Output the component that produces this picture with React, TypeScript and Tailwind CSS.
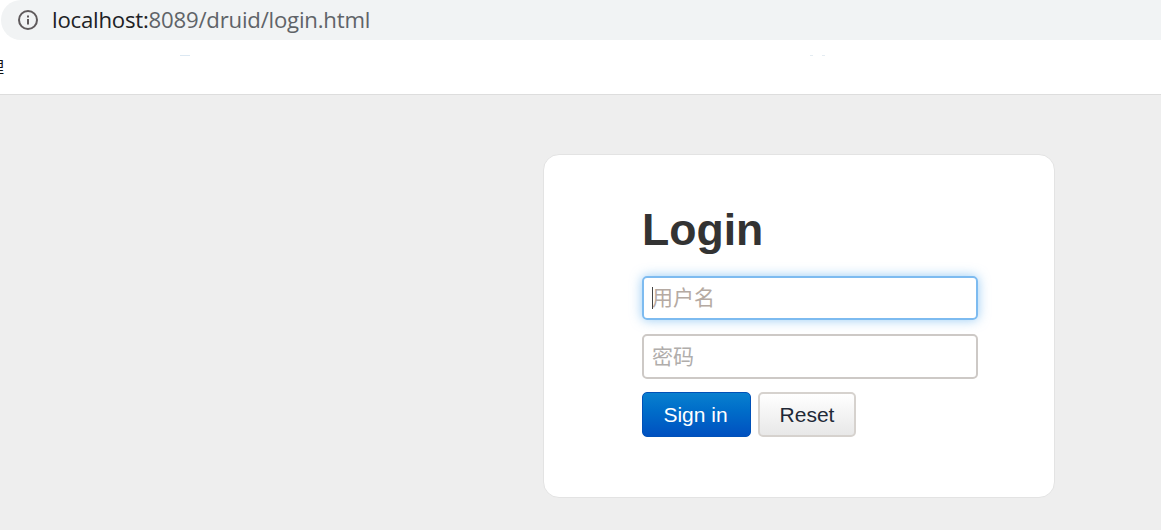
import React from 'react';

const cjk = "font-['Liberation_Sans','Noto_Sans_CJK_SC',sans-serif]";

const App: React.FC = () => {
  return (
    <div className="w-[1161px] h-[530px] overflow-hidden bg-[#eeeeee] font-['Liberation_Sans',sans-serif]">
      <div className="bg-white h-[95px] border-b border-[#dddddd]">
        <div className="h-10 bg-[#f1f3f4] rounded-l-[20px] ml-[1px] flex items-center pl-[17px]">
          <svg width="20" height="20" viewBox="0 0 20 20" fill="none" className="shrink-0">
            <circle cx="10" cy="10" r="9" stroke="#5f5a5c" strokeWidth="2" />
            <rect x="9" y="9" width="2" height="5.5" fill="#5f5a5c" />
            <rect x="9" y="5.5" width="2" height="2" fill="#5f5a5c" />
          </svg>
          <span className="ml-[14px] text-[22.2px] leading-none font-['Open_Sans',sans-serif] tracking-[-0.22px] text-[#5f6368] whitespace-nowrap">
            <span className="text-[#202124]">localhost:</span>8089/druid/login.html
          </span>
        </div>
        <div className="h-[54px] overflow-hidden relative">
          <div className="flex pt-[15px]">
            <span className="w-[180px]" />
            <span className="w-[10px] h-[1px] bg-[#dce8f2]" />
            <span className="w-[620px]" />
            <span className="w-[3px] h-[1px] bg-[#e4ecf2]" />
            <span className="w-[9px]" />
            <span className="w-[3px] h-[1px] bg-[#e4ecf2]" />
          </div>
          <span className={`absolute left-[-12px] top-[20px] text-[16px] leading-none text-[#111111] ${cjk}`}>理</span>
        </div>
      </div>

      <div className="pl-[543px] pt-[59px]">
        <div className="w-[512px] h-[344px] bg-white rounded-[16px] border border-[#e3e3e3] pl-[98px] pr-[75px] pt-[48px]">
          <h1 className="text-[44.6px] leading-[54px] font-bold text-[#333333] mb-[19px]">Login</h1>
          <div className="relative mb-[14px]">
            <input
              readOnly
              placeholder="用户名"
              className={`block w-[336px] h-[44px] rounded-[5px] border-2 border-[#7dbbf0] px-[8px] text-[21px] outline-none shadow-[0_0_12px_rgba(82,168,236,0.6)] placeholder:text-[#b5aaa2] ${cjk}`}
            />
            <span className="absolute left-[10px] top-[11px] w-[1px] h-[22px] bg-[#444444]" />
          </div>
          <input
            readOnly
            placeholder="密码"
            className={`block w-[336px] h-[45px] rounded-[5px] border-2 border-[#cdc9c6] px-[8px] text-[21px] outline-none placeholder:text-[#b0adab] ${cjk}`}
          />
          <div className="flex gap-[7px] mt-[13px]">
            <button className="w-[109px] h-[45px] pr-[2px] rounded-[5px] border border-[#0051b8] bg-gradient-to-b from-[#0a80cf] to-[#0050c0] text-white text-[21px] leading-none">
              Sign in
            </button>
            <button className="w-[98px] h-[45px] rounded-[5px] border-2 border-[#d6d2ce] bg-gradient-to-b from-[#ffffff] to-[#e8e8e8] text-[#1f2937] text-[21px] leading-none">
              Reset
            </button>
          </div>
        </div>
      </div>
    </div>
  );
};

export default App;
